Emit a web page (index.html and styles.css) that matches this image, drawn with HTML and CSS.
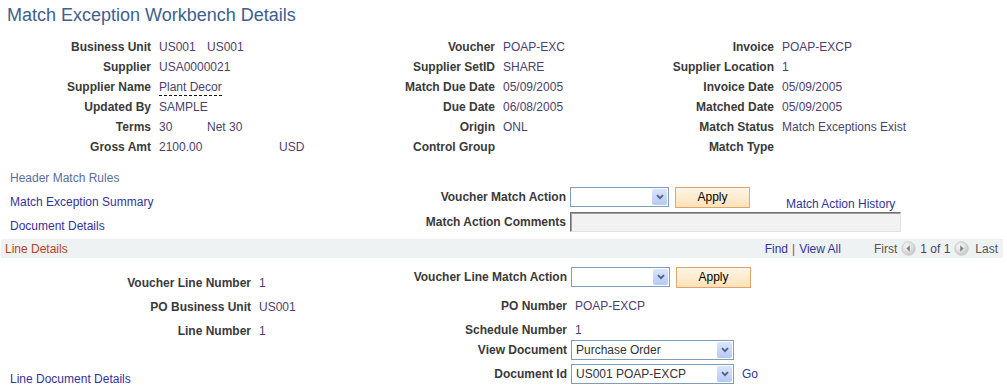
FILE: index.html
```html
<!DOCTYPE html>
<html lang="en">
<head>
    <meta charset="UTF-8">
    <meta name="viewport" content="width=device-width, initial-scale=1.0">
    <title>Match Exception Workbench Details</title>
    <link rel="stylesheet" href="styles.css">
</head>
<body>

<div class="page">
    <h1 class="page-title">Match Exception Workbench Details</h1>

    <div class="header-grid">
        <span class="lbl">Business Unit</span>
        <span class="val"><span class="val-a">US001</span>US001</span>
        <span class="lbl">Voucher</span>
        <span class="val">POAP-EXC</span>
        <span class="lbl">Invoice</span>
        <span class="val">POAP-EXCP</span>

        <span class="lbl">Supplier</span>
        <span class="val">USA0000021</span>
        <span class="lbl">Supplier SetID</span>
        <span class="val">SHARE</span>
        <span class="lbl">Supplier Location</span>
        <span class="val">1</span>

        <span class="lbl">Supplier Name</span>
        <span class="val"><span class="hint">Plant Decor</span></span>
        <span class="lbl">Match Due Date</span>
        <span class="val">05/09/2005</span>
        <span class="lbl">Invoice Date</span>
        <span class="val">05/09/2005</span>

        <span class="lbl">Updated By</span>
        <span class="val">SAMPLE</span>
        <span class="lbl">Due Date</span>
        <span class="val">06/08/2005</span>
        <span class="lbl">Matched Date</span>
        <span class="val">05/09/2005</span>

        <span class="lbl">Terms</span>
        <span class="val"><span class="val-a">30</span>Net 30</span>
        <span class="lbl">Origin</span>
        <span class="val">ONL</span>
        <span class="lbl">Match Status</span>
        <span class="val">Match Exceptions Exist</span>

        <span class="lbl">Gross Amt</span>
        <span class="val"><span class="val-a wide">2100.00</span>USD</span>
        <span class="lbl">Control Group</span>
        <span class="val"></span>
        <span class="lbl">Match Type</span>
        <span class="val"></span>
    </div>

    <div class="actions">
        <div class="link-list">
            <a href="#" class="visited">Header Match Rules</a>
            <a href="#">Match Exception Summary</a>
            <a href="#">Document Details</a>
        </div>
        <div class="action-form">
            <span class="lbl">Voucher Match Action</span>
            <div class="ctl-row">
                <div class="dropdown short">
                    <span class="dd-text"></span>
                    <span class="dd-btn"><svg width="8" height="6" viewBox="0 0 8 6"><path d="M1 1.2 L4 4.2 L7 1.2" fill="none" stroke="#4d6185" stroke-width="1.8"/></svg></span>
                </div>
                <button class="btn" type="button">Apply</button>
                <a href="#" class="history">Match Action History</a>
            </div>
            <span class="lbl">Match Action Comments</span>
            <div class="comments"></div>
        </div>
    </div>

    <div class="grid-bar">
        <span class="bar-title">Line Details</span>
        <div class="bar-nav">
            <a href="#">Find</a><span class="sep">|</span><a href="#">View All</a>
            <span class="pager">
                <span class="muted">First</span>
                <svg width="15" height="15" viewBox="0 0 15 15">
                    <defs>
                        <radialGradient id="ballA" cx="40%" cy="35%" r="70%">
                            <stop offset="0" stop-color="#fbfbfb"/>
                            <stop offset="1" stop-color="#c4c4c4"/>
                        </radialGradient>
                    </defs>
                    <circle cx="7.5" cy="7.5" r="6.8" fill="url(#ballA)" stroke="#c9c9c9" stroke-width="0.8"/>
                    <path d="M8.8 4.3 L5.4 7.5 L8.8 10.7 Z" fill="#808080"/>
                </svg>
                <span class="count">1 of 1</span>
                <svg width="15" height="15" viewBox="0 0 15 15">
                    <circle cx="7.5" cy="7.5" r="6.8" fill="url(#ballA)" stroke="#c9c9c9" stroke-width="0.8"/>
                    <path d="M6.2 4.3 L9.6 7.5 L6.2 10.7 Z" fill="#808080"/>
                </svg>
                <span class="muted">Last</span>
            </span>
        </div>
    </div>

    <div class="line-section">
        <div class="line-left">
            <div class="line-grid">
                <span class="lbl">Voucher Line Number</span>
                <span class="val">1</span>
                <span class="lbl">PO Business Unit</span>
                <span class="val">US001</span>
                <span class="lbl">Line Number</span>
                <span class="val">1</span>
            </div>
            <a href="#" class="line-link">Line Document Details</a>
        </div>
        <div class="line-form">
            <span class="lbl">Voucher Line Match Action</span>
            <div class="ctl-row">
                <div class="dropdown short">
                    <span class="dd-text"></span>
                    <span class="dd-btn"><svg width="8" height="6" viewBox="0 0 8 6"><path d="M1 1.2 L4 4.2 L7 1.2" fill="none" stroke="#4d6185" stroke-width="1.8"/></svg></span>
                </div>
                <button class="btn" type="button">Apply</button>
            </div>

            <span class="lbl">PO Number</span>
            <span class="val pad">POAP-EXCP</span>

            <span class="lbl">Schedule Number</span>
            <span class="val pad">1</span>

            <span class="lbl">View Document</span>
            <div class="ctl-row">
                <div class="dropdown long">
                    <span class="dd-text">Purchase Order</span>
                    <span class="dd-btn"><svg width="8" height="6" viewBox="0 0 8 6"><path d="M1 1.2 L4 4.2 L7 1.2" fill="none" stroke="#4d6185" stroke-width="1.8"/></svg></span>
                </div>
            </div>

            <span class="lbl">Document Id</span>
            <div class="ctl-row">
                <div class="dropdown long">
                    <span class="dd-text">US001 POAP-EXCP</span>
                    <span class="dd-btn"><svg width="8" height="6" viewBox="0 0 8 6"><path d="M1 1.2 L4 4.2 L7 1.2" fill="none" stroke="#4d6185" stroke-width="1.8"/></svg></span>
                </div>
                <a href="#" class="go">Go</a>
            </div>
        </div>
    </div>
</div>

</body>
</html>
```

FILE: styles.css
```css
html, body {
    overflow: hidden;
}

body {
    margin: 0;
    font-family: "Liberation Sans", Arial, sans-serif;
    font-size: 12px;
    color: #333;
    background-color: #fff;
}

a {
    color: #333399;
    text-decoration: none;
}

.page-title {
    margin: 0 0 11px;
    padding: 4px 0 0 7px;
    font-size: 18px;
    font-weight: normal;
    line-height: 22px;
    color: #3e5e8e;
}

.lbl {
    text-align: right;
    font-weight: bold;
    color: #3a3a3a;
    white-space: nowrap;
}

.val {
    color: #4b3f6e;
    white-space: nowrap;
}

/* header block */
.header-grid {
    display: grid;
    grid-template-columns: 151px 160px 168px 138px 125px 1fr;
    column-gap: 8px;
    grid-auto-rows: 20px;
    line-height: 20px;
    margin-bottom: 9px;
}

.val-a {
    display: inline-block;
    width: 48px;
}

.val-a.wide {
    width: 120px;
}

.hint {
    border-bottom: 1px dashed #111;
    padding-bottom: 1px;
}

/* links + match action */
.actions {
    display: flex;
}

.link-list {
    width: 390px;
    padding-left: 10px;
    display: flex;
    flex-direction: column;
    line-height: 24px;
}

.link-list .visited {
    color: #5b6d9c;
}

.action-form {
    display: grid;
    grid-template-columns: 166px auto;
    grid-template-rows: 22px 22px;
    column-gap: 4px;
    row-gap: 3px;
    align-items: center;
    margin-top: 20px;
}

.ctl-row {
    display: flex;
    align-items: center;
    height: 100%;
}

.dropdown {
    display: flex;
    align-items: center;
    box-sizing: border-box;
    height: 20px;
    padding: 1px;
    border: 1px solid #7f9db9;
    background-color: #fff;
}

.dropdown.short {
    width: 99px;
}

.dropdown.long {
    width: 163px;
}

.dd-text {
    flex: 1;
    padding-left: 3px;
    line-height: 16px;
    color: #333;
    white-space: nowrap;
}

.dd-btn {
    display: flex;
    align-items: center;
    justify-content: center;
    width: 15px;
    height: 16px;
    border-radius: 2px;
    background: linear-gradient(#dbe5fc, #b5c9f5);
}

.btn {
    box-sizing: border-box;
    width: 75px;
    height: 21px;
    margin-left: 6px;
    padding: 0;
    border: 1px solid #e2a46a;
    background: linear-gradient(#fff6e6, #fbe2b8);
    font-family: "Liberation Sans", Arial, sans-serif;
    font-size: 12px;
    color: #000;
}

.history {
    align-self: flex-end;
    margin-left: 36px;
    margin-bottom: -3px;
    line-height: 14px;
}

.comments {
    box-sizing: border-box;
    width: 331px;
    height: 20px;
    border: 1px solid;
    border-color: #6f6f6f #e2e2e2 #e2e2e2 #6f6f6f;
    box-shadow: inset 1px 1px 0 #a0a0a0;
    background-color: #f2f2f2;
}

/* line details bar */
.grid-bar {
    display: flex;
    justify-content: space-between;
    align-items: center;
    height: 19px;
    margin: 1px 4px 0 1px;
    padding: 0 5px 0 4px;
    background-color: #eff2f2;
}

.bar-title {
    color: #b9402a;
}

.bar-nav {
    display: flex;
    align-items: center;
}

.sep {
    margin: 0 4px;
    color: #b9402a;
}

.pager {
    display: flex;
    align-items: center;
    gap: 4px;
    margin-left: 33px;
}

.pager .muted:last-child {
    margin-left: 2px;
}

.muted {
    color: #555;
}

.count {
    color: #4b3f6e;
}

/* line section */
.line-section {
    display: flex;
}

.line-left {
    width: 400px;
    padding-top: 13px;
}

.line-grid {
    display: grid;
    grid-template-columns: 251px auto;
    column-gap: 8px;
    grid-auto-rows: 24px;
    line-height: 24px;
}

.line-link {
    display: block;
    margin-top: 28px;
    padding-left: 10px;
    line-height: 16px;
}

.line-form {
    display: grid;
    grid-template-columns: 167px auto;
    grid-template-rows: 22px 35px 13px 27px 22px;
    column-gap: 4px;
    align-items: center;
    padding-top: 8px;
    line-height: 14px;
}

.val.pad {
    padding-left: 4px;
}

.go {
    margin-left: 8px;
}
```
